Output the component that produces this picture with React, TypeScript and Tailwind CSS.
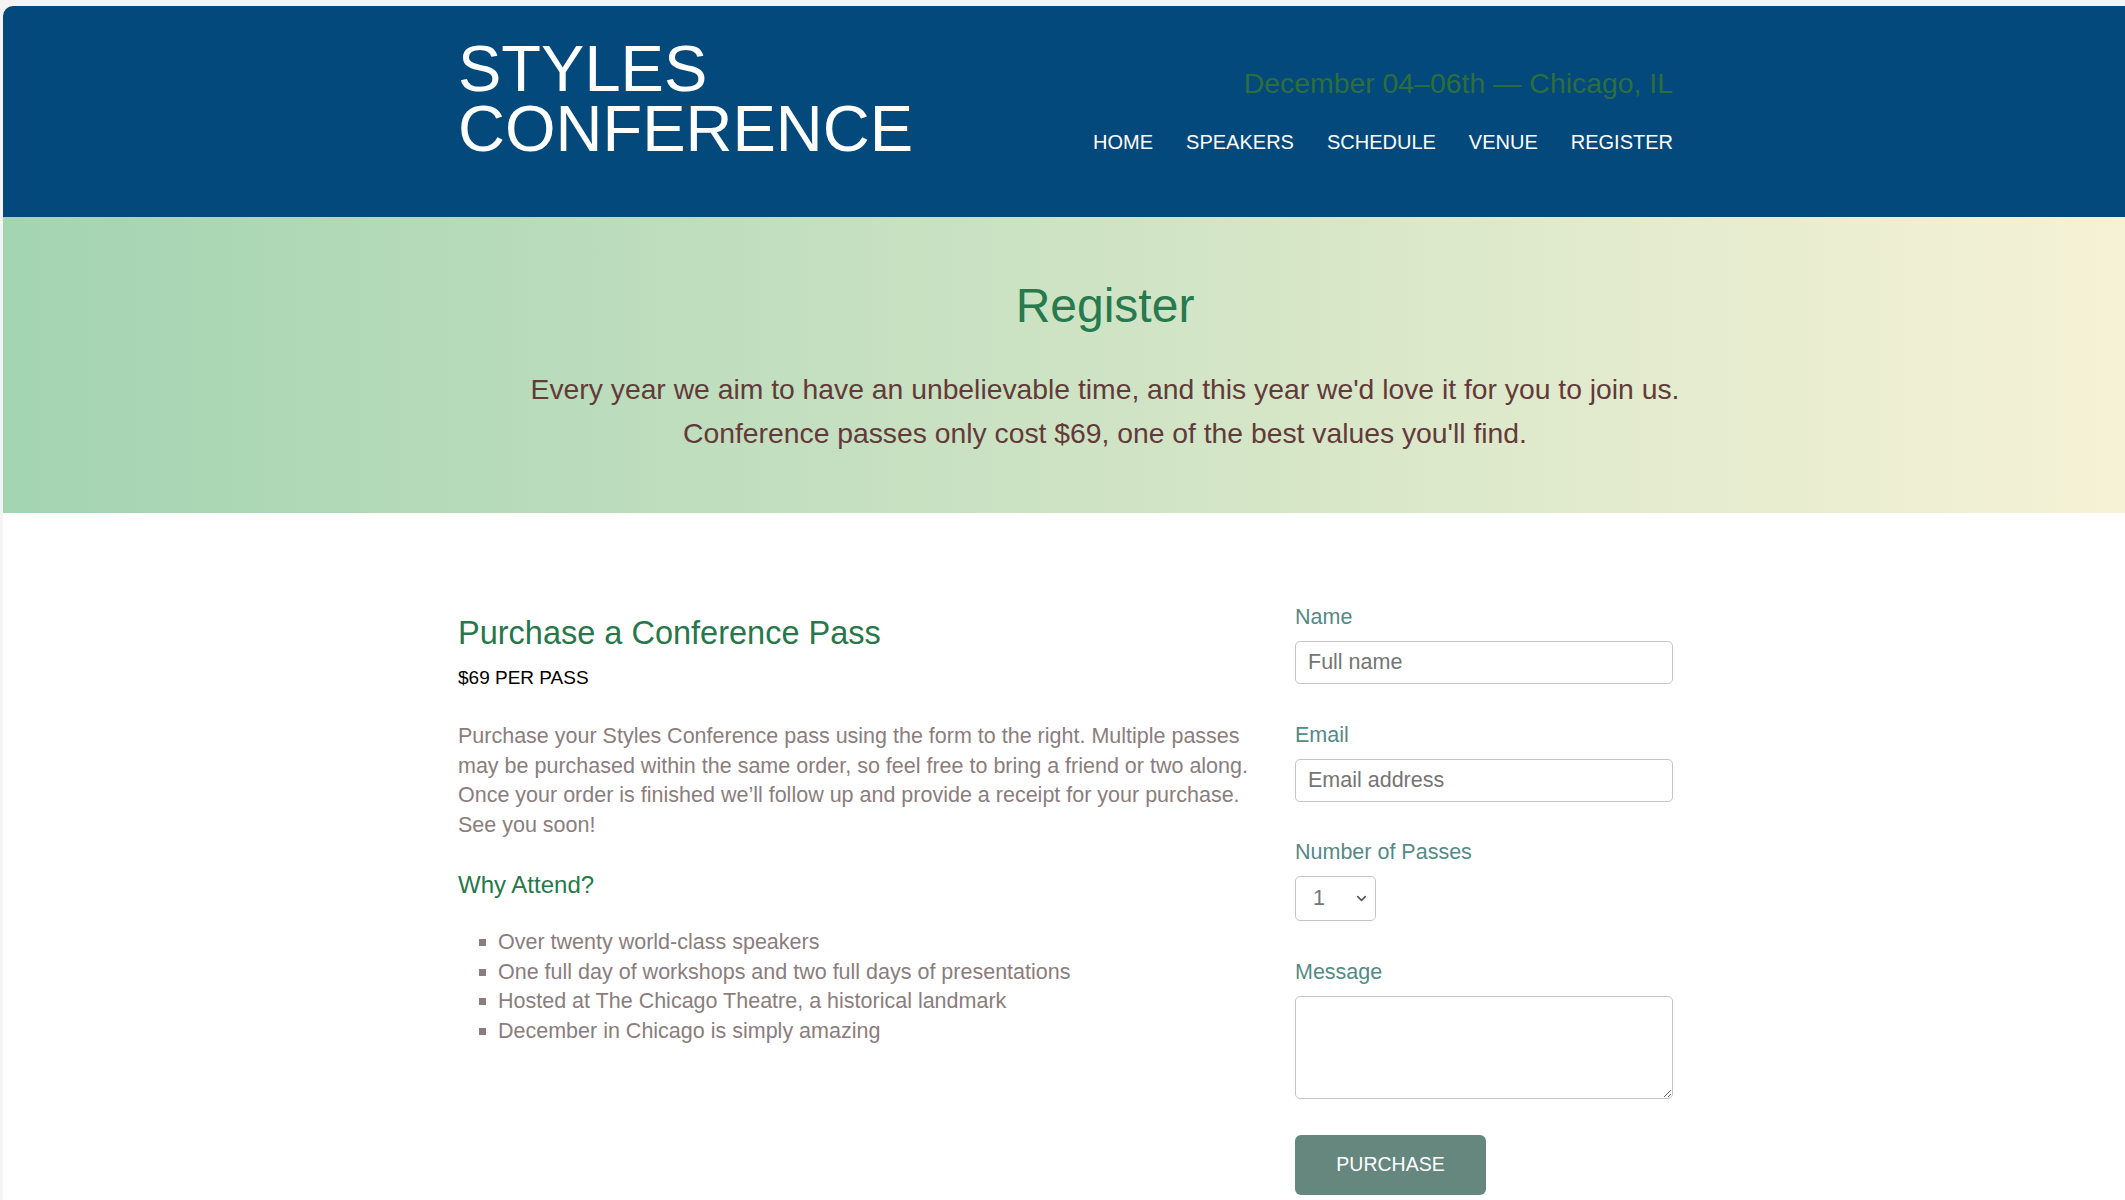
import { ChevronDown } from "lucide-react";

const navLinks = ["Home", "Speakers", "Schedule", "Venue", "Register"];

const reasons = [
  "Over twenty world-class speakers",
  "One full day of workshops and two full days of presentations",
  "Hosted at The Chicago Theatre, a historical landmark",
  "December in Chicago is simply amazing",
];

const font = "font-['Liberation_Sans',Arial,sans-serif]";

function Field({ label, children }: { label: string; children: React.ReactNode }) {
  return (
    <label className="flex flex-col">
      <span className="mb-[10px] text-[21.5px] leading-[28px] text-[#558a86]">{label}</span>
      {children}
    </label>
  );
}

export default function App() {
  return (
    <div className={`min-h-screen bg-[#f4f4f4] pl-[3px] pt-[6px] ${font}`}>
      <div className="min-h-[1194px] overflow-hidden rounded-tl-[10px] bg-white">
        <header className="bg-[#03497c] pb-[58px] pt-[33px] text-white">
          <div className="mx-auto flex w-[1218px] items-start justify-between pl-[3px]">
            <a href="#" className="text-[65px] leading-[60px]">
              STYLES
              <br />
              CONFERENCE
            </a>
            <div className="mt-[26px] flex flex-col items-end">
              <p className="text-[28.4px] leading-[36px] text-[#2d6e3e]">December 04&ndash;06th &mdash; Chicago, IL</p>
              <nav className="mt-[29px] flex gap-[33px] text-[20px] uppercase leading-[24px]">
                {navLinks.map((link) => (
                  <a key={link} href="#">
                    {link}
                  </a>
                ))}
              </nav>
            </div>
          </div>
        </header>

        <section className="bg-gradient-to-r from-[#a3d4b2] to-[#f6f2d6] pb-[58px] pl-[82px] pt-[61px] text-center">
          <h1 className="text-[48px] leading-[56px] text-[#267a4e]">Register</h1>
          <p className="mt-[33px] text-[28.3px] leading-[44px] text-[#633a3a]">
            Every year we aim to have an unbelievable time, and this year we'd love it for you to join us.
            <br />
            Conference passes only cost $69, one of the best values you'll find.
          </p>
        </section>

        <section className="mx-auto flex w-[1218px] justify-between pb-[4px] pl-[3px] pt-[90px]">
          <div className="mt-[10px] w-[800px]">
            <h2 className="text-[32.5px] leading-[40px] text-[#26784a]">Purchase a Conference Pass</h2>
            <h3 className="mt-[13px] text-[19px] leading-[24px] text-black">$69 PER PASS</h3>
            <p className="mt-[32px] text-[21.5px] leading-[29.5px] text-[#8b7d7d]">
              Purchase your Styles Conference pass using the form to the right. Multiple passes may be purchased
              within the same order, so feel free to bring a friend or two along. Once your order is finished
              we&rsquo;ll follow up and provide a receipt for your purchase. See you soon!
            </p>
            <h4 className="mt-[30px] text-[24px] leading-[30px] text-[#26784a]">Why Attend?</h4>
            <ul className="mt-[28px] text-[21.5px] leading-[29.5px] text-[#8b7d7d]">
              {reasons.map((reason) => (
                <li key={reason} className="flex items-center pl-[21px]">
                  <span className="mr-[12px] h-[7px] w-[7px] bg-[#8b7d7d]" />
                  {reason}
                </li>
              ))}
            </ul>
          </div>

          <form className="flex w-[378px] flex-col gap-[36.5px]" onSubmit={(e) => e.preventDefault()}>
            <Field label="Name">
              <input
                type="text"
                placeholder="Full name"
                className="h-[43px] rounded-[5px] border border-[#c5c5c5] px-[12px] text-[21.5px] placeholder:text-[#757575]"
              />
            </Field>
            <Field label="Email">
              <input
                type="email"
                placeholder="Email address"
                className="h-[43px] rounded-[5px] border border-[#c5c5c5] px-[12px] text-[21.5px] placeholder:text-[#757575]"
              />
            </Field>
            <Field label="Number of Passes">
              <div className="relative h-[45px] w-[81px]">
                <select className="h-full w-full appearance-none rounded-[5px] border border-[#c5c5c5] bg-white pl-[17px] text-[21.5px] text-[#757575]">
                  <option>1</option>
                  <option>2</option>
                  <option>3</option>
                  <option>4</option>
                  <option>5</option>
                </select>
                <ChevronDown
                  className="pointer-events-none absolute right-[7px] top-[15px] h-[15px] w-[15px] text-[#555]"
                  strokeWidth={2.5}
                />
              </div>
            </Field>
            <Field label="Message">
              <textarea className="h-[103px] rounded-[5px] border border-[#c5c5c5] px-[12px] py-[8px] text-[21.5px]" />
            </Field>
            <button
              type="submit"
              className="h-[60px] w-[191px] rounded-[6px] bg-[#66877d] text-[19.5px] uppercase text-white"
            >
              Purchase
            </button>
          </form>
        </section>
      </div>
    </div>
  );
}
